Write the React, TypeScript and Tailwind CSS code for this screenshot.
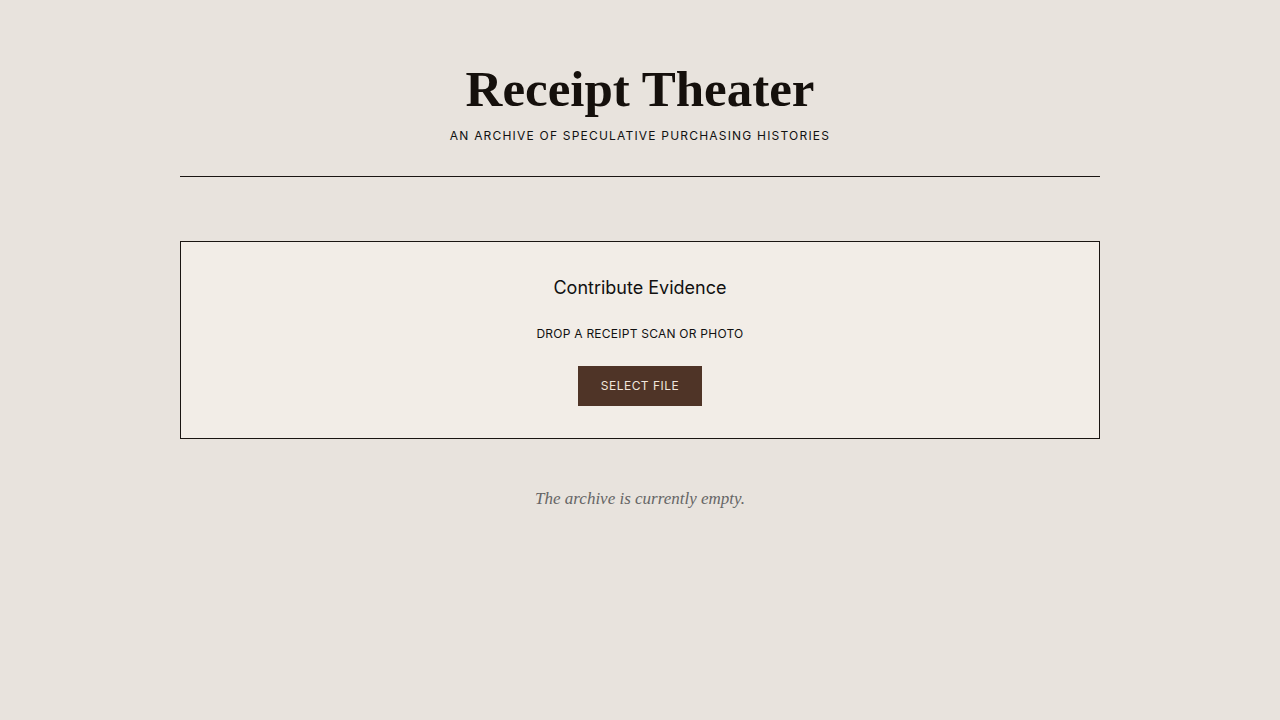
import React from "react";

export default function App() {
  return (
    <div className="min-h-screen w-full bg-[#e8e3dd] text-[#111]" style={{ fontFamily: "Inter, 'Liberation Sans', sans-serif" }}>
      <div className="mx-auto w-[920px]">
        <header className="flex flex-col items-center border-b border-[#1a1512] pt-[61px] pb-[32px]">
          <h1 className="text-[51px] leading-[56px] font-bold text-[#15100c] tracking-[0px]" style={{ fontFamily: "'Liberation Serif', serif" }}>
            Receipt Theater
          </h1>
          <p className="mt-[11px] text-[12px] leading-[16px] tracking-[0.1em] uppercase text-[#111]">
            An Archive of Speculative Purchasing Histories
          </p>
        </header>

        <section className="mt-[64px] flex flex-col items-center border border-[#1a1512] bg-[#f2ede7] pt-[32px] pb-[32px]">
          <h2 className="text-[18px] leading-[28px] text-[#111]">Contribute Evidence</h2>
          <p className="mt-[24px] text-[12px] leading-[16px] tracking-[0.02em] uppercase text-[#111]">
            Drop a receipt scan or photo
          </p>
          <button className="mt-[24px] h-[40px] w-[124px] bg-[#4f3427] text-[12px] tracking-[0.04em] uppercase text-[#f0e6dc]">
            Select File
          </button>
        </section>

        <p className="mt-[46px] text-center text-[17px] leading-[28px] italic text-[#666]" style={{ fontFamily: "'Liberation Serif', serif" }}>
          The archive is currently empty.
        </p>
      </div>
    </div>
  );
}
